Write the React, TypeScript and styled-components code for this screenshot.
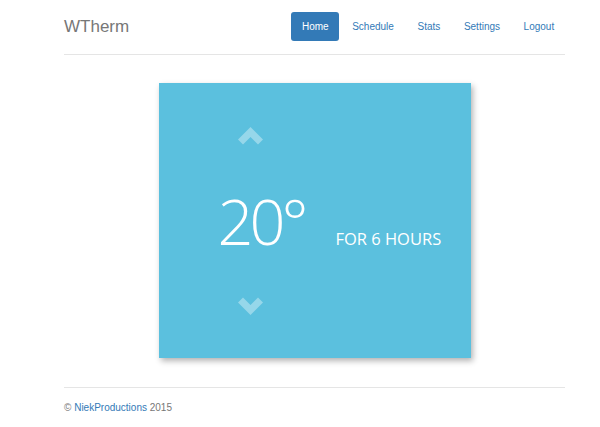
import styled, { createGlobalStyle } from 'styled-components';

const GlobalStyle = createGlobalStyle`
  body {
    margin: 0;
    background: #fff;
    font-family: "Liberation Sans", Arial, sans-serif;
    font-size: 10px;
    color: #333;
  }
`;

const navItems = ['Home', 'Schedule', 'Stats', 'Settings', 'Logout'];

const Chevron = ({ down }: { down?: boolean }) => (
  <svg width="25" height="18" viewBox="0 0 25 18">
    <polygon
      points={down ? '0,5.5 5,0.5 12.5,8 20,0.5 25,5.5 12.5,18' : '0,12.5 12.5,0 25,12.5 20,17.5 12.5,10 5,17.5'}
      fill="rgba(255,255,255,0.36)"
    />
  </svg>
);

const App = () => {
  return (
    <>
      <GlobalStyle />
      <Page>
        <Header>
          <Brand>WTherm</Brand>
          <Nav>
            {navItems.map((item, i) => (
              <NavLink key={item} active={i === 0}>{item}</NavLink>
            ))}
          </Nav>
        </Header>

        <Main>
          <Card>
            <Dial>
              <ArrowButton><Chevron /></ArrowButton>
              <TempRow>
                <Temp>20°</Temp>
                <Duration>FOR 6 HOURS</Duration>
              </TempRow>
              <ArrowButton down><Chevron down /></ArrowButton>
            </Dial>
          </Card>
        </Main>

        <Footer>
          © <FooterLink>NiekProductions</FooterLink> 2015
        </Footer>
      </Page>
    </>
  );
};

const Page = styled.div`
  width: 501px;
  margin-left: 64px;
`;

const Header = styled.header`
  display: flex;
  align-items: center;
  justify-content: space-between;
  padding: 12px 0 13px;
  border-bottom: 1px solid #e5e5e5;
`;

const Brand = styled.h3`
  margin: 0;
  font-size: 17px;
  font-weight: 400;
  line-height: 29px;
  color: #777;
`;

const Nav = styled.nav`
  display: flex;
  gap: 2px;
`;

const NavLink = styled.a<{ active?: boolean }>`
  display: flex;
  align-items: center;
  height: 28.6px;
  padding: 0 10.8px;
  border-radius: 3px;
  font-size: 10px;
  color: ${(p) => (p.active ? '#fff' : '#337ab7')};
  background: ${(p) => (p.active ? '#337ab7' : 'transparent')};
  cursor: pointer;
`;

const Main = styled.main`
  display: flex;
  justify-content: center;
  padding: 28.3px 0 29px;
`;

const Card = styled.div`
  width: 312px;
  box-sizing: border-box;
  padding: 44px 0 43px 59px;
  background: #5bc0de;
  box-shadow: 2px 3px 6px rgba(0, 0, 0, 0.3);
`;

const Dial = styled.div`
  display: flex;
  flex-direction: column;
  align-items: flex-start;
`;

const ArrowButton = styled.div<{ down?: boolean }>`
  display: flex;
  margin-left: 20px;
  margin-top: ${(p) => (p.down ? '45px' : '0')};
  margin-bottom: ${(p) => (p.down ? '0' : '44px')};
  cursor: pointer;
`;

const TempRow = styled.div`
  display: flex;
  align-items: baseline;
  gap: 31px;
  color: #fff;
  font-family: "Open Sans", sans-serif;
`;

const Temp = styled.div`
  font-size: 63px;
  font-weight: 300;
  line-height: 1;
  letter-spacing: -4px;
`;

const Duration = styled.div`
  font-size: 16.5px;
  font-weight: 400;
`;

const Footer = styled.footer`
  padding-top: 12.5px;
  border-top: 1px solid #e5e5e5;
  color: #777;
  font-size: 10px;
  line-height: 14.3px;
`;

const FooterLink = styled.a`
  color: #337ab7;
`;

export default App;
